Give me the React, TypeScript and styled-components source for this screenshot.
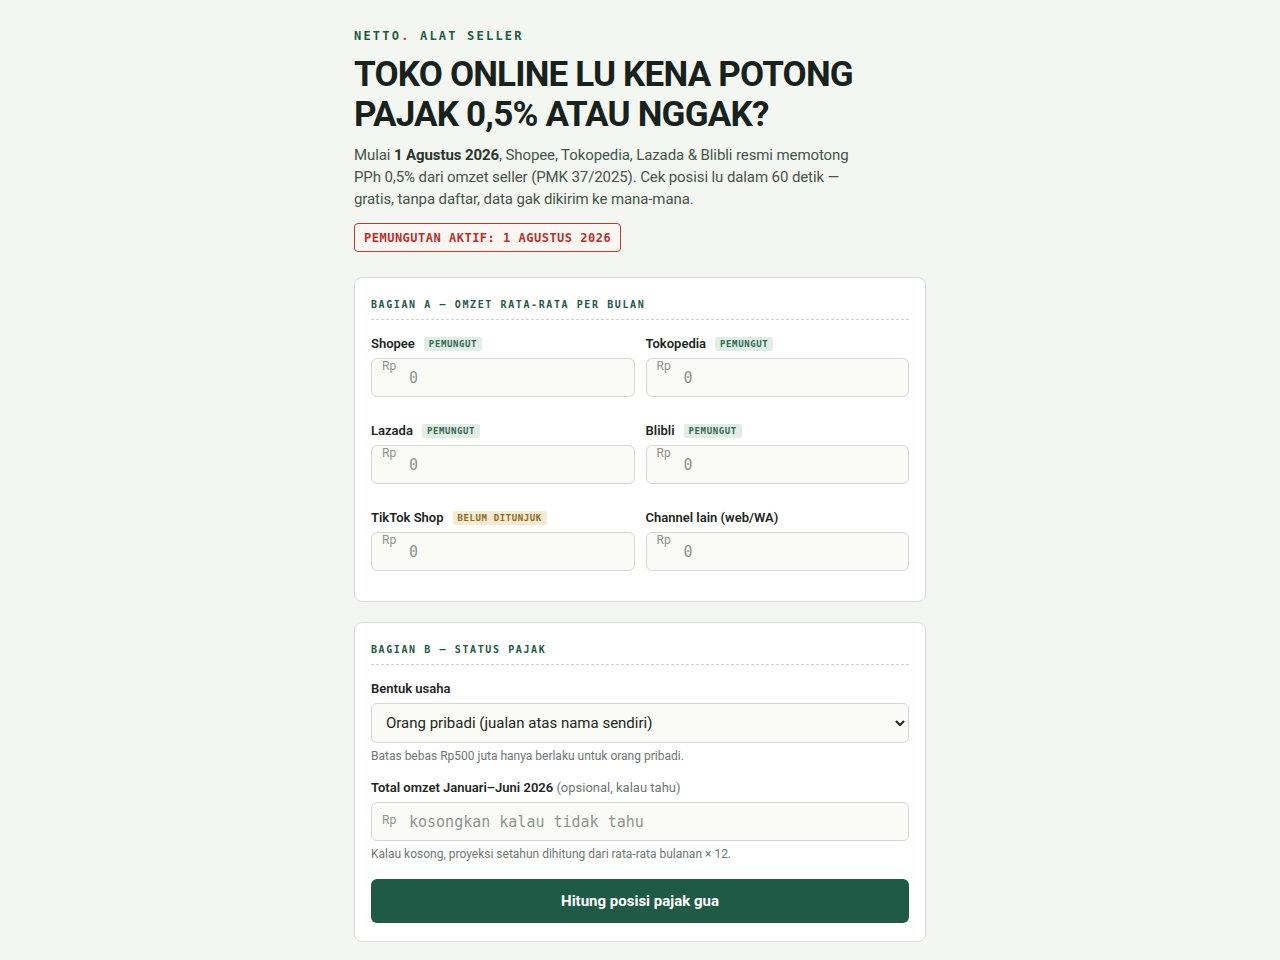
import React from 'react';
import styled, {createGlobalStyle} from 'styled-components';

const sans = `Roboto, "Liberation Sans", sans-serif`;
const mono = `"DejaVu Sans Mono", "Liberation Mono", monospace`;
const green = '#1f5a45';

const GlobalStyle = createGlobalStyle`
    html, body {
        margin: 0;
        padding: 0;
        background: #f4f6f1;
    }
    body {
        font-family: ${sans};
        color: #1d2622;
    }
    * {
        box-sizing: border-box;
    }
`;

const Page = styled.main`
    width: 572px;
    margin: 0 auto;
    padding: 29px 0 40px;
`;

const Eyebrow = styled.div`
    font-family: ${mono};
    font-size: 12px;
    font-weight: 700;
    letter-spacing: 2.2px;
    color: ${green};
    line-height: 14px;
`;

const Dot = styled.span`
    color: #c0392b;
`;

const Title = styled.h1`
    margin: 12px 0 0;
    font-family: ${sans};
    font-size: 35px;
    line-height: 40px;
    font-weight: 700;
    letter-spacing: -0.8px;
    color: #17221d;
    width: 520px;
`;

const Lead = styled.p`
    margin: 9px 0 0;
    font-size: 15px;
    line-height: 22px;
    letter-spacing: -0.1px;
    color: #46544d;
    width: 505px;

    & b {
        color: #2a3530;
    }
`;

const Deadline = styled.div`
    display: inline-block;
    margin-top: 13px;
    padding: 7px 9px 6px;
    border: 1px solid #c0392b;
    border-radius: 4px;
    background: #fbf6f3;
    font-family: ${mono};
    font-size: 12px;
    font-weight: 700;
    letter-spacing: 0.5px;
    color: #b8322a;
    line-height: 14px;
`;

const Card = styled.section<{$top: number; $bottom: number}>`
    margin-top: ${(p) => p.$top}px;
    background: #ffffff;
    border: 1px solid #d9ddd7;
    border-radius: 8px;
    padding: 20px 16px ${(p) => p.$bottom}px;
`;

const SectionTitle = styled.h2`
    margin: 0 0 16px;
    padding-bottom: 8px;
    border-bottom: 1px dashed #cdd3cd;
    font-family: ${mono};
    font-size: 10px;
    font-weight: 700;
    letter-spacing: 1.6px;
    color: ${green};
    line-height: 13px;
`;

const Grid = styled.div`
    display: grid;
    grid-template-columns: 1fr 1fr;
    column-gap: 11px;
    row-gap: 26px;
`;

const Field = styled.div<{$gapTop?: number}>`
    display: flex;
    flex-direction: column;
    gap: 6px;
    margin-top: ${(p) => p.$gapTop ?? 0}px;
`;

const Label = styled.label`
    display: flex;
    align-items: center;
    gap: 9px;
    font-size: 13px;
    font-weight: 600;
    color: #1d2622;
    line-height: 16px;
`;

const Muted = styled.span`
    font-weight: 400;
    color: #6d7771;
`;

const Tag = styled.span<{$tone: 'green' | 'amber'}>`
    font-family: ${mono};
    font-size: 9px;
    font-weight: 700;
    letter-spacing: 0.6px;
    line-height: 14px;
    padding: 0 5px;
    border-radius: 2px;
    background: ${(p) => (p.$tone === 'green' ? '#e2ede6' : '#f6ebd2')};
    color: ${(p) => (p.$tone === 'green' ? '#2f6a52' : '#8d6b1d')};
`;

const InputWrap = styled.div`
    position: relative;
`;

const Prefix = styled.span<{$center?: boolean}>`
    position: absolute;
    left: 11px;
    top: ${(p) => (p.$center ? '11px' : '1px')};
    font-size: 12px;
    line-height: 14px;
    color: #8c948f;
    pointer-events: none;
`;

const MoneyInput = styled.input`
    width: 100%;
    height: 39px;
    padding: 0 10px 0 37px;
    border: 1px solid #d4d8d3;
    border-radius: 6px;
    background: #fafaf7;
    font-family: ${mono};
    font-size: 15px;
    color: #1d2622;
    outline: none;

    &::placeholder {
        color: #8e9590;
    }
`;

const Select = styled.select`
    width: 100%;
    height: 40px;
    padding: 0 10px 0 10px;
    border: 1px solid #d4d8d3;
    border-radius: 6px;
    background: #fafaf7;
    font-family: ${sans};
    font-size: 15px;
    color: #1d2622;
    outline: none;
`;

const Hint = styled.p`
    margin: 0;
    font-size: 12px;
    line-height: 14px;
    color: #6d7771;
`;

const Stack = styled.div`
    display: flex;
    flex-direction: column;
`;

const Submit = styled.button`
    margin-top: 18px;
    width: 100%;
    height: 44px;
    border: 0;
    border-radius: 6px;
    background: #1e5a46;
    color: #ffffff;
    font-family: ${sans};
    font-size: 15px;
    font-weight: 700;
    cursor: pointer;
`;

type Channel = {name: string; tag?: {text: string; tone: 'green' | 'amber'}};

const channels: Channel[] = [
    {name: 'Shopee', tag: {text: 'PEMUNGUT', tone: 'green'}},
    {name: 'Tokopedia', tag: {text: 'PEMUNGUT', tone: 'green'}},
    {name: 'Lazada', tag: {text: 'PEMUNGUT', tone: 'green'}},
    {name: 'Blibli', tag: {text: 'PEMUNGUT', tone: 'green'}},
    {name: 'TikTok Shop', tag: {text: 'BELUM DITUNJUK', tone: 'amber'}},
    {name: 'Channel lain (web/WA)'},
];

const App = () => (
    <>
        <GlobalStyle/>
        <Page>
            <Eyebrow>NETTO<Dot>.</Dot> ALAT SELLER</Eyebrow>
            <Title>TOKO ONLINE LU KENA POTONG PAJAK 0,5% ATAU NGGAK?</Title>
            <Lead>
                Mulai <b>1 Agustus 2026</b>, Shopee, Tokopedia, Lazada &amp; Blibli resmi memotong
                PPh 0,5% dari omzet seller (PMK 37/2025). Cek posisi lu dalam 60 detik —
                gratis, tanpa daftar, data gak dikirim ke mana-mana.
            </Lead>
            <Deadline>PEMUNGUTAN AKTIF: 1 AGUSTUS 2026</Deadline>

            <Card $top={25} $bottom={30}>
                <SectionTitle>BAGIAN A — OMZET RATA-RATA PER BULAN</SectionTitle>
                <Grid>
                    {channels.map((ch) => (
                        <Field key={ch.name}>
                            <Label>
                                {ch.name}
                                {ch.tag && <Tag $tone={ch.tag.tone}>{ch.tag.text}</Tag>}
                            </Label>
                            <InputWrap>
                                <Prefix>Rp</Prefix>
                                <MoneyInput placeholder='0'/>
                            </InputWrap>
                        </Field>
                    ))}
                </Grid>
            </Card>

            <Card $top={20} $bottom={18}>
                <SectionTitle>BAGIAN B — STATUS PAJAK</SectionTitle>
                <Stack>
                    <Field>
                        <Label>Bentuk usaha</Label>
                        <Select defaultValue='op'>
                            <option value='op'>Orang pribadi (jualan atas nama sendiri)</option>
                            <option value='bu'>Badan usaha (PT / CV)</option>
                        </Select>
                        <Hint>Batas bebas Rp500 juta hanya berlaku untuk orang pribadi.</Hint>
                    </Field>
                    <Field $gapTop={17}>
                        <Label as='div'>
                            <span>Total omzet Januari–Juni 2026 <Muted>(opsional, kalau tahu)</Muted></span>
                        </Label>
                        <InputWrap>
                            <Prefix $center>Rp</Prefix>
                            <MoneyInput placeholder='kosongkan kalau tidak tahu'/>
                        </InputWrap>
                        <Hint>Kalau kosong, proyeksi setahun dihitung dari rata-rata bulanan × 12.</Hint>
                    </Field>
                    <Submit type='button'>Hitung posisi pajak gua</Submit>
                </Stack>
            </Card>
        </Page>
    </>
);

export default App;
